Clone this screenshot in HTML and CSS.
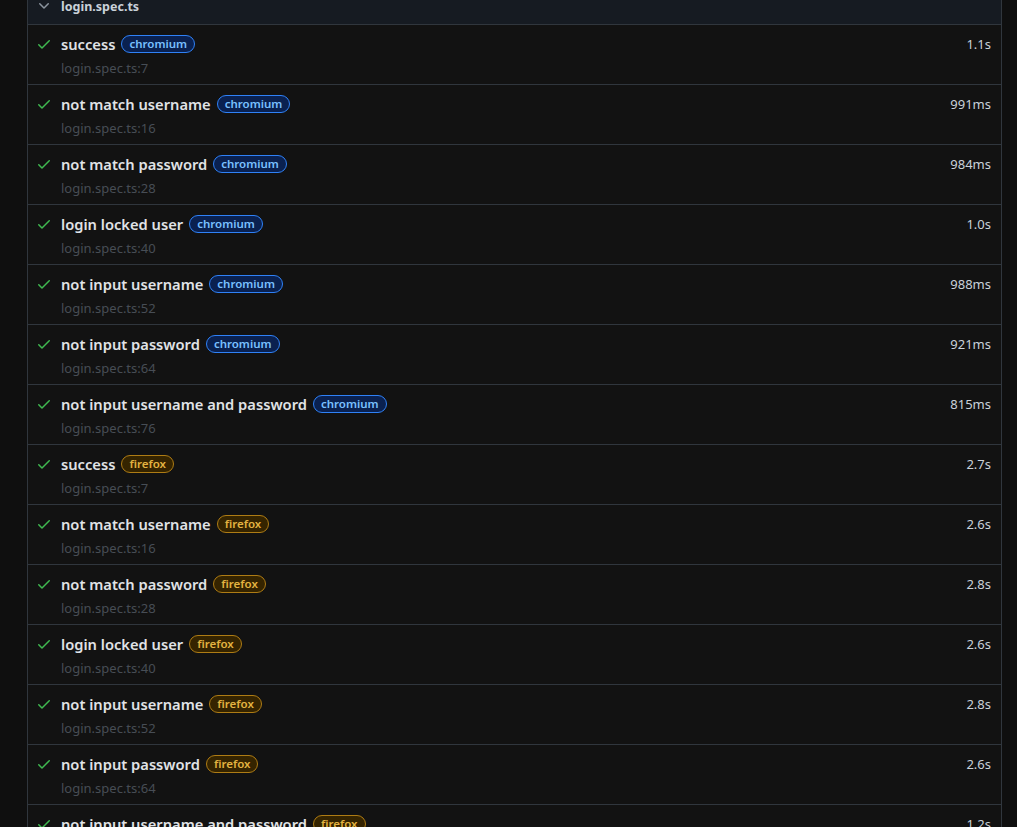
FILE: index.html
```html
<!DOCTYPE html>
<html>
<head>
<meta charset="utf-8">
<link rel="stylesheet" href="styles.css">
</head>
<body>
<div class="page">
  <div class="panel">
    <div class="panel-header">
      <svg class="chevron" viewBox="0 0 16 16" width="16" height="16"><path d="M12.78 5.22a.75.75 0 0 1 0 1.06l-4.25 4.25a.75.75 0 0 1-1.06 0L3.22 6.28a.75.75 0 0 1 1.06-1.06L8 8.94l3.72-3.72a.75.75 0 0 1 1.06 0Z"/></svg>
      <span class="file-name">login.spec.ts</span>
    </div>
    <div class="rows" id="rows"></div>
  </div>
</div>
<script>
const data = [
  ["success","chromium","1.1s","7"],
  ["not match username","chromium","991ms","16"],
  ["not match password","chromium","984ms","28"],
  ["login locked user","chromium","1.0s","40"],
  ["not input username","chromium","988ms","52"],
  ["not input password","chromium","921ms","64"],
  ["not input username and password","chromium","815ms","76"],
  ["success","firefox","2.7s","7"],
  ["not match username","firefox","2.6s","16"],
  ["not match password","firefox","2.8s","28"],
  ["login locked user","firefox","2.6s","40"],
  ["not input username","firefox","2.8s","52"],
  ["not input password","firefox","2.6s","64"],
  ["not input username and password","firefox","1.2s","76"]
];
const check = '<svg class="check" viewBox="0 0 16 16" width="16" height="16"><path d="M13.78 4.22a.75.75 0 0 1 0 1.06l-7.25 7.25a.75.75 0 0 1-1.06 0L2.22 9.28a.751.751 0 0 1 .018-1.042.751.751 0 0 1 1.042-.018L6 10.94l6.72-6.72a.75.75 0 0 1 1.06 0Z"/></svg>';
document.getElementById('rows').innerHTML = data.map(d =>
  `<div class="row">
     <div class="row-main">
       ${check}
       <span class="title">${d[0]}</span>
       <span class="label ${d[1]}">${d[1]}</span>
       <span class="duration">${d[2]}</span>
     </div>
     <div class="location">login.spec.ts:${d[3]}</div>
   </div>`).join('');
</script>
</body>
</html>
```
FILE: styles.css
```css
html, body {
  margin: 0;
  padding: 0;
  background: #0f0f0f;
  overflow: hidden;
}
body {
  font-family: "Noto Sans", "Segoe UI", sans-serif;
  color: #c9d1d9;
}
.page {
  padding: 0 15px 0 27px;
  margin-top: -12px;
}
.panel {
  border: 1px solid #30363d;
  border-top: none;
  background: #121212;
}
.panel-header {
  display: flex;
  align-items: center;
  height: 36px;
  background: #161b22;
  border-bottom: 1px solid #30363d;
  padding-left: 8px;
  gap: 9px;
}
.chevron {
  fill: #8b949e;
  width: 16px;
  height: 16px;
}
.file-name {
  font-size: 12.5px;
  font-weight: 700;
  color: #c9d1d9;
}
.row {
  height: 60px;
  box-sizing: border-box;
  border-bottom: 1px solid #30363d;
  padding: 9px 10px 0 8px;
}
.row-main {
  display: flex;
  align-items: center;
  height: 20px;
}
.check {
  fill: #3fb950;
  margin-right: 9px;
  flex: none;
}
.title {
  font-size: 14.7px;
  font-weight: 600;
  color: #e0e3e6;
}
.label {
  margin-left: 6px;
  font-size: 11.5px;
  font-weight: 600;
  line-height: 16px;
  padding: 0 7px;
  border-radius: 10px;
  border: 1px solid;
}
.label.chromium {
  color: #79c0ff;
  background: #0a2150;
  border-color: #2f81f7;
}
.label.firefox {
  color: #e3b341;
  background: #352400;
  border-color: #ae7c14;
}
.duration {
  margin-left: auto;
  font-size: 13px;
  color: #c9d1d9;
}
.location {
  margin-top: 5px;
  padding-left: 25px;
  font-size: 13px;
  color: #474d55;
}
```
